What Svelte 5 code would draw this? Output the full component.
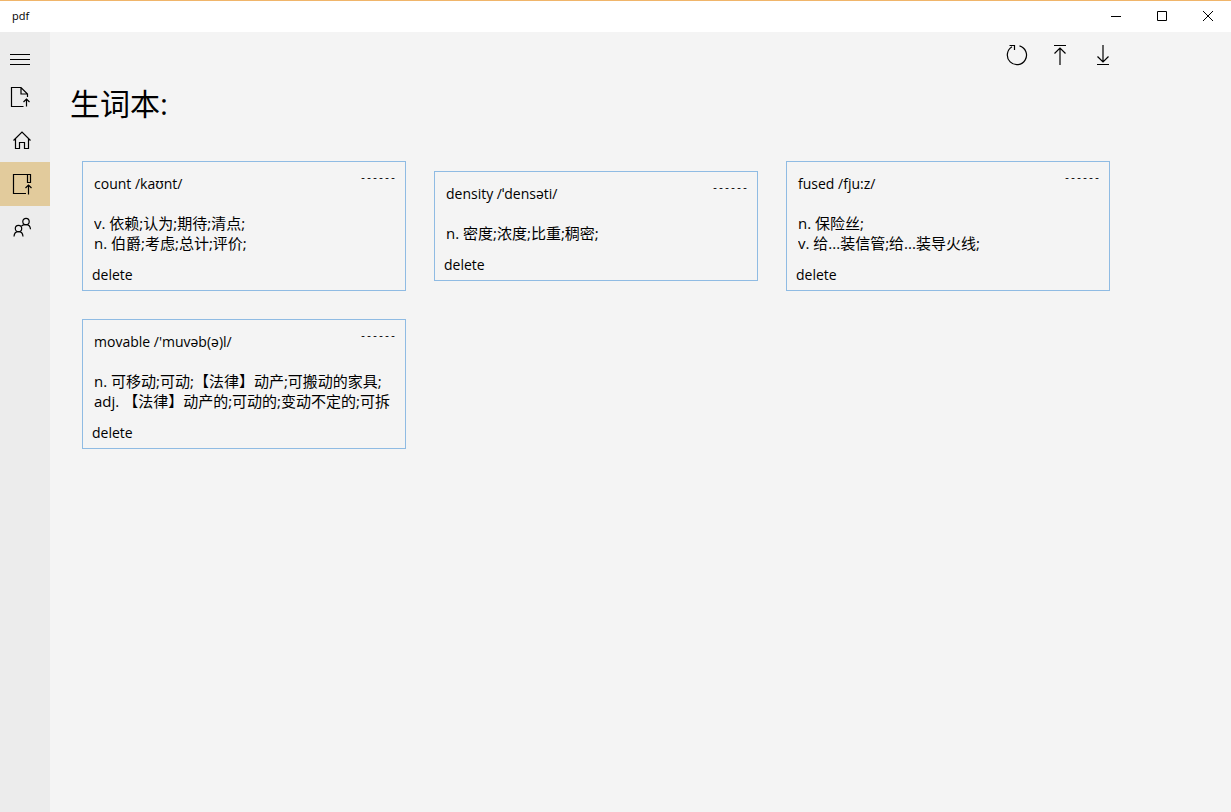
<script>
	let selected = $state('words');

	let words = $state([
		{ word: 'count', phonetic: 'kaʊnt', lines: ['v. 依赖;认为;期待;清点;', 'n. 伯爵;考虑;总计;评价;'] },
		{ word: 'density', phonetic: 'ˈdensəti', lines: ['n. 密度;浓度;比重;稠密;'] },
		{ word: 'fused', phonetic: 'fju:z', lines: ['n. 保险丝;', 'v. 给...装信管;给...装导火线;'] },
		{
			word: 'movable',
			phonetic: "'muvəb(ə)l",
			lines: ['n. 可移动;可动;【法律】动产;可搬动的家具;', 'adj. 【法律】动产的;可动的;变动不定的;可拆']
		}
	]);

	const NAV_ITEMS = [
		{ id: 'open', label: 'Open file' },
		{ id: 'home', label: 'Home' },
		{ id: 'words', label: '生词本' },
		{ id: 'people', label: 'People' }
	];

	function remove(word) {
		words = words.filter((entry) => entry.word !== word);
	}
</script>

<div class="window">
	<header class="titlebar">
		<span class="title">pdf</span>
		<div class="controls">
			<button aria-label="Minimize">
				<svg width="12" height="12" viewBox="0 0 12 12"><path d="M1 6.5h10" /></svg>
			</button>
			<button aria-label="Maximize">
				<svg width="12" height="12" viewBox="0 0 12 12"><path d="M1.5 1.5h9v9h-9z" /></svg>
			</button>
			<button aria-label="Close">
				<svg width="12" height="12" viewBox="0 0 12 12"><path d="M1 1l10 10M11 1L1 11" /></svg>
			</button>
		</div>
	</header>

	<div class="body">
		<nav class="sidebar">
			<button class="menu" aria-label="Menu">
				<svg width="20" height="14" viewBox="0 0 20 14"><path d="M0 2.5h20M0 7.5h20M0 12.5h20" /></svg>
			</button>
			{#each NAV_ITEMS as item (item.id)}
				<button
					class="nav-item"
					class:active={selected === item.id}
					aria-label={item.label}
					onclick={() => (selected = item.id)}
				>
					<svg width="24" height="24" viewBox="0 0 24 24">
						{#if item.id === 'open'}
							<path d="M13.5 22.5h-12v-19h9.5l6.5 6.5v3M11 3.500v6.500h6.500M16.500 22.500V15M13.500 18l3-3 3 3" />
						{:else if item.id === 'home'}
							<path d="M3.500 12.500L12 4l8.500 8.500M5.500 11v9.500h4v-6h5v6h4V11" />
						{:else if item.id === 'words'}
							<path d="M16 21.500H3.500v-19h17v8h-3v-8M18.500 22.500V13M15.500 16l3-3 3 3" />
						{:else}
							<circle cx="16" cy="5.500" r="3.200" />
							<circle cx="8.500" cy="12.500" r="3.200" />
							<path d="M4 20.500c.2-3 2-4.800 4.500-4.800s4.300 1.800 4.500 4.800M11.500 10c1-.9 2.500-1.300 4.500-1.300 2.500 0 4.300 1.800 4.500 4.600" />
						{/if}
					</svg>
				</button>
			{/each}
		</nav>

		<main>
			<div class="toolbar">
				<button aria-label="Refresh">
					<svg width="24" height="24" viewBox="0 0 24 24">
						<path d="M14.500 2.800A9.600 9.600 0 1 1 7 3.800M4.500 2.500h5V7" />
					</svg>
				</button>
				<button aria-label="Upload">
					<svg width="24" height="24" viewBox="0 0 24 24">
						<path d="M6 2.500h12M12 22V5M6.500 10.500L12 5l5.500 5.500" />
					</svg>
				</button>
				<button aria-label="Download">
					<svg width="24" height="24" viewBox="0 0 24 24">
						<path d="M6 21.500h12M12 2v17M6.500 13.500L12 19l5.500-5.500" />
					</svg>
				</button>
			</div>

			<h1>生词本:</h1>

			<div class="cards">
				{#each words as entry (entry.word)}
					<article class="card">
						<div class="head">
							<h2>{entry.word} /{entry.phonetic}/</h2>
							<button class="fold">------</button>
						</div>
						<div class="meaning">
							{#each entry.lines as line}
								<p>{line}</p>
							{/each}
						</div>
						<button class="delete" onclick={() => remove(entry.word)}>delete</button>
					</article>
				{/each}
			</div>
		</main>
	</div>
</div>

<style>
	:global(body) {
		background: #f4f4f4;
	}

	.window {
		display: flex;
		flex-direction: column;
		min-height: 100vh;
		box-sizing: border-box;
		border-top: 1px solid #f0b56a;
		background: #f4f4f4;
		color: #000;
		font-family: 'Open Sans', 'Noto Sans', 'Noto Sans CJK SC', sans-serif;
		font-size: 14px;
		line-height: 20px;
	}

	button {
		display: flex;
		align-items: center;
		justify-content: center;
		padding: 0;
		border: none;
		background: none;
		color: inherit;
		font: inherit;
		cursor: pointer;
	}

	svg {
		fill: none;
		stroke: #000;
		stroke-width: 1.2;
	}

	h1,
	h2,
	p {
		margin: 0;
		font-weight: 400;
	}

	.titlebar {
		display: flex;
		justify-content: space-between;
		align-items: flex-start;
		height: 31px;
		padding-left: 12px;
		background: #fff;
	}

	.title {
		font-size: 11px;
		line-height: 30px;
	}

	.controls {
		display: flex;
	}

	.controls button {
		width: 46px;
		height: 30px;
	}

	.controls svg {
		stroke-width: 1;
	}

	.body {
		display: flex;
		flex: 1;
	}

	.sidebar {
		flex: none;
		width: 50px;
		padding-top: 12px;
		background: #ececec;
	}

	.menu {
		width: 40px;
		height: 30px;
	}

	.menu svg {
		stroke-width: 1;
	}

	.nav-item {
		width: 100%;
		height: 44px;
		padding-right: 6px;
	}

	.nav-item.active {
		background: #e2cb9c;
	}

	main {
		flex: 1;
		min-width: 0;
	}

	.toolbar {
		display: flex;
		justify-content: flex-end;
		padding-right: 107px;
	}

	.toolbar button {
		width: 43px;
		height: 46px;
	}

	h1 {
		padding: 6px 20px 0;
		font-size: 30px;
		line-height: 40px;
	}

	.cards {
		display: flex;
		flex-wrap: wrap;
		align-items: center;
		gap: 28px;
		padding: 37px 32px;
	}

	.card {
		box-sizing: border-box;
		width: 324px;
		padding: 12px 9px 5px;
		border: 1px solid #8fbbe3;
	}

	.head {
		display: flex;
		justify-content: space-between;
		align-items: flex-start;
		padding-left: 2px;
	}

	h2 {
		font-size: 14px;
	}

	.fold {
		font-family: 'Liberation Mono', monospace;
		font-size: 10px;
		line-height: 10px;
	}

	.meaning {
		padding: 19px 2px 12px;
		font-size: 15px;
	}

	.meaning p {
		overflow: hidden;
		white-space: nowrap;
	}
</style>
